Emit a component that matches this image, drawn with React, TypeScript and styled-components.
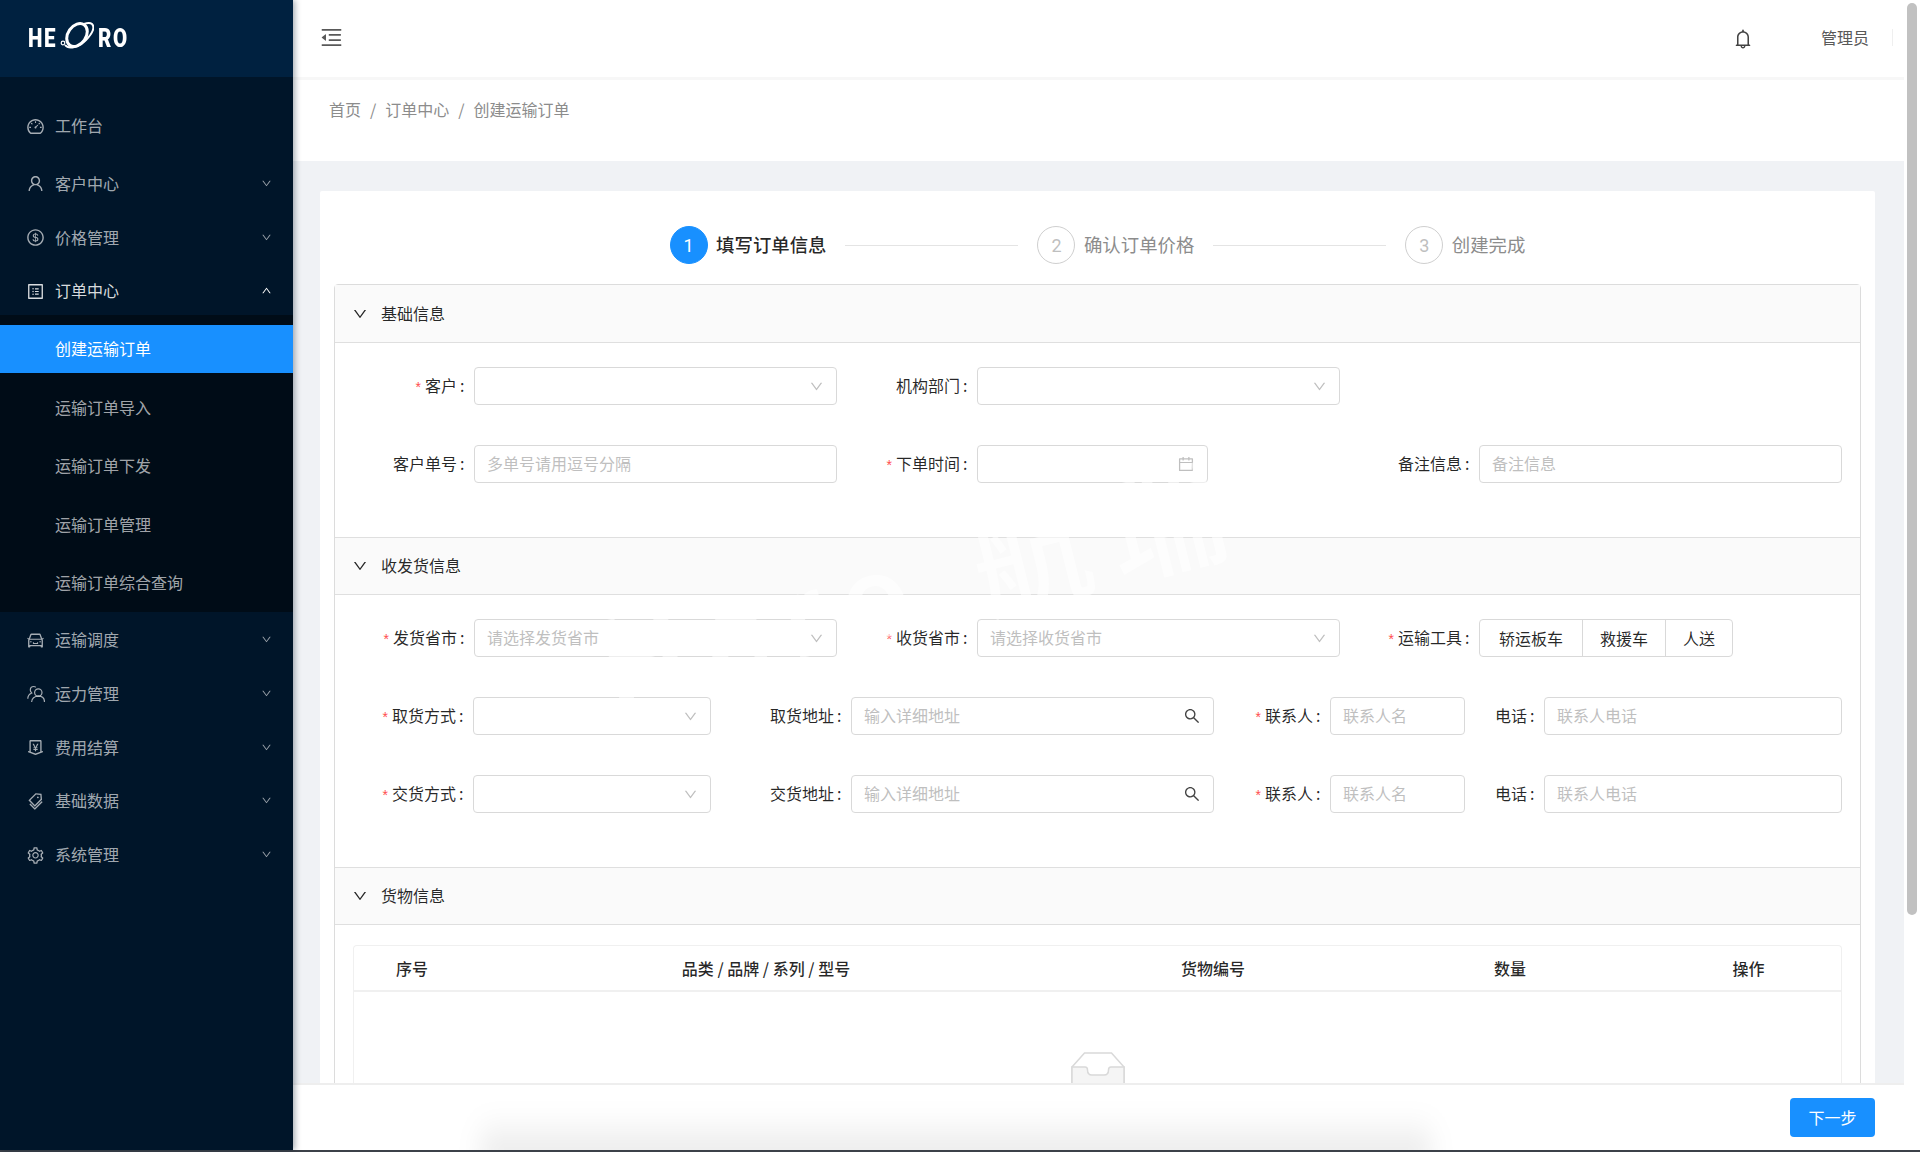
import React from 'react';
import styled, { createGlobalStyle } from 'styled-components';
import {
  AiOutlineDashboard,
  AiOutlineUser,
  AiOutlineDollar,
  AiOutlineProfile,
  AiOutlineCar,
  AiOutlineMoneyCollect,
  AiOutlineTags,
  AiOutlineSetting,
  AiOutlineDown,
  AiOutlineUp,
  AiOutlineBell,
  AiOutlineSearch,
  AiOutlineCalendar,
  AiOutlineMenuFold,
} from 'react-icons/ai';

const GlobalStyle = createGlobalStyle`
  html, body {
    margin: 0;
    padding: 0;
    width: 1920px;
    height: 1152px;
    overflow: hidden;
    font-family: "Noto Sans CJK SC", "Noto Sans", "Liberation Sans", sans-serif;
    font-size: 16px;
    color: rgba(0, 0, 0, 0.85);
  }
  * { box-sizing: border-box; }
`;

const Page = styled.div`
  position: relative;
  width: 1920px;
  height: 1152px;
  display: flex;
  flex-direction: column;
  background: #fff;
  overflow: hidden;
`;

const Frame = styled.div`
  flex: 1;
  min-height: 0;
  display: flex;
`;

const BottomEdge = styled.div`
  height: 2px;
  background: #3c4149;
`;

/* 侧边栏 */
const Side = styled.aside`
  width: 293px;
  flex-shrink: 0;
  background: #001529;
  box-shadow: 2px 0 6px rgba(0, 21, 41, 0.35);
  z-index: 2;
  display: flex;
  flex-direction: column;
`;

const LogoBar = styled.div`
  height: 77px;
  background: #002140;
  display: flex;
  align-items: center;
  padding-left: 28px;
`;

const LogoText = styled.span`
  display: inline-block;
  width: 32px;
  transform: scaleX(0.82);
  transform-origin: left center;
  color: #fff;
  font-family: "Roboto", "Liberation Sans", sans-serif;
  font-weight: 900;
  font-size: 25px;
  letter-spacing: 2px;
  white-space: nowrap;
`;

const LogoMark = styled.svg`
  width: 34px;
  height: 34px;
  margin: -3px 4px 0 0;
`;

const Menu = styled.nav`
  padding-top: 25px;
  display: flex;
  flex-direction: column;
  gap: 5.7px;
`;

const MenuRow = styled.div<{ $open?: boolean; $solo?: boolean }>`
  height: 48px;
  flex-shrink: 0;
  display: flex;
  align-items: center;
  padding: 0 21px 0 26px;
  color: ${(p) => (p.$open ? 'rgba(255,255,255,0.85)' : 'rgba(255,255,255,0.65)')};
  margin-bottom: ${(p) => (p.$solo ? '4.3px' : '0')};
  svg.lead {
    width: 19px;
    height: 19px;
    margin-right: 10px;
  }
`;

const MenuText = styled.span`
  flex: 1;
  line-height: 1;
  margin-top: -2px;
`;

const Arrow = styled.span<{ $open?: boolean }>`
  display: flex;
  margin-top: -1px;
  color: ${(p) => (p.$open ? '#fff' : 'rgba(255,255,255,0.6)')};
  font-size: 11px;
  stroke: currentColor;
  stroke-width: ${(p) => (p.$open ? '60px' : '30px')};
`;

const SubList = styled.div`
  margin: -5.7px 0 -1.3px;
  padding: 10px 0 5px;
  background: #000c17;
  display: flex;
  flex-direction: column;
  gap: 10.4px;
`;

const SubRow = styled.div<{ $active?: boolean }>`
  height: 48px;
  display: flex;
  align-items: center;
  padding: 0 0 2px 55px;
  background: ${(p) => (p.$active ? '#1890ff' : 'transparent')};
  color: ${(p) => (p.$active ? '#fff' : 'rgba(255,255,255,0.65)')};
`;

/* 主区域 */
const Main = styled.main`
  flex: 1;
  min-width: 0;
  display: flex;
  flex-direction: column;
`;

const TopBar = styled.header`
  height: 80px;
  flex-shrink: 0;
  border-bottom: 3px solid #f7f7f7;
  background: #fff;
  display: flex;
  align-items: center;
  padding: 0 11px 2px 26px;
  color: #595959;
`;

const Collapse = styled.span`
  display: flex;
  font-size: 25px;
  flex: 1;
  margin-top: -1px;
`;

const Bell = styled.span`
  display: flex;
  font-size: 22px;
  margin-top: 3px;
  color: #434343;
`;

const UserName = styled.span`
  margin-left: 67px;
  padding-right: 23px;
  width: 48px;
  box-sizing: content-box;
  white-space: nowrap;
  color: #595959;
  border-right: 1px solid #efefef;
  line-height: 17px;
`;

const CrumbBar = styled.div`
  height: 81px;
  flex-shrink: 0;
  background: #fff;
  padding: 16px 0 0 36px;
  display: flex;
  align-items: flex-start;
  color: #8c8c8c;
  line-height: 26px;
`;

const CrumbSep = styled.span`
  margin: 0 9px;
`;

const Scroll = styled.div`
  flex: 1;
  min-height: 0;
  overflow: hidden;
  background: #f0f2f5;
  padding: 30px 29px 0 27px;
`;

const Card = styled.section`
  background: #fff;
  border-radius: 2px;
  padding: 35px 14px 30px;
`;

const Steps = styled.div`
  display: flex;
  justify-content: center;
  align-items: center;
  height: 38px;
  margin-bottom: 20px;
`;

const StepDot = styled.span<{ $active?: boolean }>`
  width: 38px;
  height: 38px;
  border-radius: 50%;
  display: flex;
  align-items: center;
  justify-content: center;
  font-size: 18px;
  font-family: "Roboto", sans-serif;
  background: ${(p) => (p.$active ? '#1890ff' : '#fff')};
  border: 1px solid ${(p) => (p.$active ? '#1890ff' : '#cfcfcf')};
  color: ${(p) => (p.$active ? '#fff' : '#bfbfbf')};
`;

const StepTitle = styled.span<{ $active?: boolean }>`
  margin-left: 8.5px;
  font-size: 18.4px;
  line-height: 1;
  margin-top: -1px;
  font-weight: ${(p) => (p.$active ? 500 : 400)};
  color: ${(p) => (p.$active ? 'rgba(0,0,0,0.85)' : '#8c8c8c')};
`;

const StepLine = styled.span`
  width: 173px;
  height: 1px;
  margin: 0 19px;
  background: #e4e4e4;
`;

const Panels = styled.div`
  border: 1px solid #dcdcdc;
  border-radius: 4px;
`;

const PanelHead = styled.div<{ $first?: boolean }>`
  height: 58px;
  background: #fafafa;
  border-bottom: 1px solid #dfdfdf;
  border-top: ${(p) => (p.$first ? 'none' : '1px solid #dfdfdf')};
  display: flex;
  align-items: center;
  padding: 0 0 2px 17px;
  svg {
    font-size: 16px;
    margin-right: 13px;
    margin-top: 2px;
  }
`;

const PanelBody = styled.div<{ $pb: number }>`
  padding: 24px 18px ${(p) => p.$pb}px 0;
  display: flex;
  flex-direction: column;
  gap: 40px;
`;

const FormRow = styled.div`
  display: flex;
  height: 38px;
`;

const Field = styled.div<{ $w: number }>`
  width: ${(p) => p.$w}px;
  flex-shrink: 0;
  display: flex;
  align-items: center;
`;

const Label = styled.label<{ $w?: number }>`
  flex: ${(p) => (p.$w ? `0 0 ${p.$w}px` : '1')};
  text-align: right;
  padding-right: 9.5px;
  white-space: nowrap;
  margin-top: -3px;
`;

const Star = styled.i`
  color: #ff4d4f;
  font-style: normal;
  font-family: "Liberation Sans", sans-serif;
  font-size: 14px;
  margin-right: 4px;
`;

const Colon = styled.span`
  margin-left: 3px;
`;

const Box = styled.div<{ $w: number }>`
  width: ${(p) => p.$w}px;
  height: 38px;
  flex-shrink: 0;
  border: 1px solid #d9d9d9;
  border-radius: 4px;
  background: #fff;
  display: flex;
  align-items: center;
  padding: 0 12px;
  font-size: 16px;
`;

const BoxInput = styled.input`
  flex: 1;
  min-width: 0;
  height: 100%;
  border: none;
  outline: none;
  padding: 0 0 2px;
  background: transparent;
  font: inherit;
  &::placeholder {
    color: #bfbfbf;
    opacity: 1;
  }
`;

const BoxIcon = styled.span<{ $dark?: boolean; $size?: number }>`
  display: flex;
  color: ${(p) => (p.$dark ? '#434343' : '#bfbfbf')};
  font-size: ${(p) => p.$size ?? 14}px;
`;

const RadioGroup = styled.div`
  display: flex;
  height: 38px;
  border: 1px solid #d9d9d9;
  border-radius: 4px;
`;

const RadioItem = styled.div<{ $w: number }>`
  width: ${(p) => p.$w}px;
  display: flex;
  align-items: center;
  justify-content: center;
  padding-bottom: 1px;
  & + & {
    border-left: 1px solid #d9d9d9;
  }
`;

const TableWrap = styled.div`
  margin: 20px 18px 0;
  border: 1px solid #f0f0f0;
  border-bottom: none;
  border-radius: 4px 4px 0 0;
`;

const TableHead = styled.div`
  height: 46px;
  display: grid;
  grid-template-columns: 116px 592px 302px 292px 1fr;
  align-items: center;
  border-bottom: 2px solid #f0f0f0;
  font-weight: 500;
  text-align: center;
`;

const TableEmpty = styled.div`
  height: 300px;
  display: flex;
  justify-content: center;
  padding-top: 60px;
`;

const EmptyIcon = styled.svg`
  width: 54px;
  height: 42px;
`;

const Footer = styled.footer`
  position: relative;
  height: 67px;
  flex-shrink: 0;
  background: #fff;
  border-top: 2px solid #eeeeee;
  display: flex;
  justify-content: flex-end;
  align-items: flex-start;
  padding: 13px 29px 0 0;
  overflow: hidden;
  z-index: 1;
  &::before {
    content: '';
    position: absolute;
    left: 188px;
    width: 950px;
    bottom: -14px;
    height: 52px;
    background: linear-gradient(to bottom, rgba(0, 0, 0, 0), rgba(0, 0, 0, 0.1));
    filter: blur(12px);
  }
`;

const NextButton = styled.button`
  position: relative;
  width: 85px;
  height: 39px;
  border: none;
  border-radius: 4px;
  background: #1890ff;
  color: #fff;
  font: inherit;
  padding: 0 0 2px;
`;

const ScrollTrack = styled.div`
  width: 16px;
  flex-shrink: 0;
  padding: 3px 3px 0;
  background: #fff;
`;

const ScrollThumb = styled.div`
  width: 10px;
  height: 912px;
  border-radius: 5px;
  background: #c1c1c1;
`;

const Watermark = styled.div`
  position: absolute;
  left: 590px;
  top: 490px;
  transform: rotate(-14deg);
  font-family: "Roboto", "Noto Sans CJK SC", sans-serif;
  font-size: 118px;
  font-weight: 500;
  letter-spacing: 20px;
  white-space: nowrap;
  color: rgba(255, 255, 255, 0.55);
  pointer-events: none;
  z-index: 1;
`;

const GroupIcon = () => (
  <svg className="lead" viewBox="0 0 19 19" fill="none" stroke="currentColor" strokeWidth="1.2">
    <circle cx="12.3" cy="7.500" r="3.700" />
    <path d="M5.600 17c0-3.500 3-5.800 6.700-5.800s6.200 2.300 6.200 5.800" />
    <path d="M9.800 2.200C9.200 1.800 8.600 1.500 7.800 1.500 5.800 1.500 4.300 3.100 4.300 5.100c0 1.200.6 2.200 1.400 2.900C3.400 9 1.800 11.100 1.800 13.700" />
  </svg>
);

const sideTop = [
  { text: '客户中心', icon: <AiOutlineUser className="lead" /> },
  { text: '价格管理', icon: <AiOutlineDollar className="lead" /> },
];

const sideBottom = [
  { text: '运输调度', icon: <AiOutlineCar className="lead" /> },
  { text: '运力管理', icon: <GroupIcon /> },
  { text: '费用结算', icon: <AiOutlineMoneyCollect className="lead" /> },
  { text: '基础数据', icon: <AiOutlineTags className="lead" /> },
  { text: '系统管理', icon: <AiOutlineSetting className="lead" /> },
];

const subMenu = ['创建运输订单', '运输订单导入', '运输订单下发', '运输订单管理', '运输订单综合查询'];

function SideItem({ text, icon }: { text: string; icon: React.ReactNode }) {
  return (
    <MenuRow>
      {icon}
      <MenuText>{text}</MenuText>
      <Arrow><AiOutlineDown /></Arrow>
    </MenuRow>
  );
}

interface IField {
  label: string;
  required?: boolean;
  width: number;
  box: number;
  labelWidth?: number;
  placeholder?: string;
  icon?: 'down' | 'search' | 'date';
}

function FormField({ label, required, width, box, labelWidth, placeholder, icon }: IField) {
  return (
    <Field $w={width}>
      <Label $w={labelWidth}>{required && <Star>*</Star>}{label}<Colon>:</Colon></Label>
      <Box $w={box}>
        <BoxInput placeholder={placeholder} />
        {icon === 'down' && <BoxIcon $size={15}><AiOutlineDown /></BoxIcon>}
        {icon === 'search' && <BoxIcon $dark $size={18}><AiOutlineSearch /></BoxIcon>}
        {icon === 'date' && <BoxIcon $size={18}><AiOutlineCalendar /></BoxIcon>}
      </Box>
    </Field>
  );
}

export default function App() {
  return (
    <Page>
      <GlobalStyle />
      <Frame>
        <Side>
          <LogoBar>
            <LogoText>HE</LogoText>
            <LogoMark viewBox="0 0 34 34" fill="none" stroke="#fff">
              <ellipse cx="17" cy="15" rx="9" ry="12.500" transform="rotate(35 17 15)" strokeWidth="3" />
              <path d="M5 25c4 5 14 2 21-5s9-13 6-16c-2-1.500-5-1-8 0" strokeWidth="2" />
              <circle cx="3" cy="23" r="1.800" strokeWidth="1.200" />
            </LogoMark>
            <LogoText>RO</LogoText>
          </LogoBar>
          <Menu>
            <MenuRow $solo>
              <AiOutlineDashboard className="lead" />
              <MenuText>工作台</MenuText>
            </MenuRow>
            {sideTop.map((item) => <SideItem key={item.text} {...item} />)}
            <MenuRow $open>
              <AiOutlineProfile className="lead" />
              <MenuText>订单中心</MenuText>
              <Arrow $open><AiOutlineUp /></Arrow>
            </MenuRow>
            <SubList>
              {subMenu.map((text, i) => <SubRow key={text} $active={i === 0}>{text}</SubRow>)}
            </SubList>
            {sideBottom.map((item) => <SideItem key={item.text} {...item} />)}
          </Menu>
        </Side>

        <Main>
          <TopBar>
            <Collapse><AiOutlineMenuFold /></Collapse>
            <Bell><AiOutlineBell /></Bell>
            <UserName>管理员</UserName>
          </TopBar>
          <CrumbBar>
            首页<CrumbSep>/</CrumbSep>订单中心<CrumbSep>/</CrumbSep>创建运输订单
          </CrumbBar>
          <Scroll>
            <Card>
              <Steps>
                <StepDot $active>1</StepDot>
                <StepTitle $active>填写订单信息</StepTitle>
                <StepLine />
                <StepDot>2</StepDot>
                <StepTitle>确认订单价格</StepTitle>
                <StepLine />
                <StepDot>3</StepDot>
                <StepTitle>创建完成</StepTitle>
              </Steps>
              <Panels>
                <PanelHead $first><AiOutlineDown />基础信息</PanelHead>
                <PanelBody $pb={54}>
                  <FormRow>
                    <FormField label="客户" required width={502} box={363} icon="down" />
                    <FormField label="机构部门" width={503} box={363} icon="down" />
                  </FormRow>
                  <FormRow>
                    <FormField label="客户单号" width={502} box={363} placeholder="多单号请用逗号分隔" />
                    <FormField label="下单时间" required width={503} labelWidth={140} box={231} icon="date" />
                    <FormField label="备注信息" width={502} box={363} placeholder="备注信息" />
                  </FormRow>
                </PanelBody>
                <PanelHead><AiOutlineDown />收发货信息</PanelHead>
                <PanelBody $pb={54}>
                  <FormRow>
                    <FormField label="发货省市" required width={502} box={363} placeholder="请选择发货省市" icon="down" />
                    <FormField label="收货省市" required width={503} box={363} placeholder="请选择收货省市" icon="down" />
                    <Field $w={502}>
                      <Label $w={139}><Star>*</Star>运输工具<Colon>:</Colon></Label>
                      <RadioGroup>
                        <RadioItem $w={102}>轿运板车</RadioItem>
                        <RadioItem $w={83}>救援车</RadioItem>
                        <RadioItem $w={67}>人送</RadioItem>
                      </RadioGroup>
                    </Field>
                  </FormRow>
                  <FormRow>
                    <FormField label="取货方式" required width={376} box={238} icon="down" />
                    <FormField label="取货地址" width={503} box={363} placeholder="输入详细地址" icon="search" />
                    <FormField label="联系人" required width={251} box={135} placeholder="联系人名" />
                    <FormField label="电话" width={377} box={298} placeholder="联系人电话" />
                  </FormRow>
                  <FormRow>
                    <FormField label="交货方式" required width={376} box={238} icon="down" />
                    <FormField label="交货地址" width={503} box={363} placeholder="输入详细地址" icon="search" />
                    <FormField label="联系人" required width={251} box={135} placeholder="联系人名" />
                    <FormField label="电话" width={377} box={298} placeholder="联系人电话" />
                  </FormRow>
                </PanelBody>
                <PanelHead><AiOutlineDown />货物信息</PanelHead>
                <TableWrap>
                  <TableHead>
                    <span>序号</span>
                    <span>品类 / 品牌 / 系列 / 型号</span>
                    <span>货物编号</span>
                    <span>数量</span>
                    <span>操作</span>
                  </TableHead>
                  <TableEmpty>
                    <EmptyIcon viewBox="0 0 54 42">
                      <path d="M1 15 13.500 1h27L53 15v27H1Z" fill="#fff" stroke="#d9d9d9" strokeWidth="1.500" />
                      <path d="M1 15h13c2 0 2.500 1 2.500 3 0 3 1.500 5 4.500 5h12c3 0 4.500-2 4.500-5 0-2 .5-3 2.500-3h13v27H1Z" fill="#f5f5f5" stroke="#d9d9d9" strokeWidth="1.500" />
                    </EmptyIcon>
                  </TableEmpty>
                </TableWrap>
              </Panels>
            </Card>
          </Scroll>
          <Footer>
            <NextButton>下一步</NextButton>
          </Footer>
        </Main>
        <ScrollTrack><ScrollThumb /></ScrollTrack>
      </Frame>
      <BottomEdge />
      <Watermark>Hero 航瑞</Watermark>
    </Page>
  );
}
